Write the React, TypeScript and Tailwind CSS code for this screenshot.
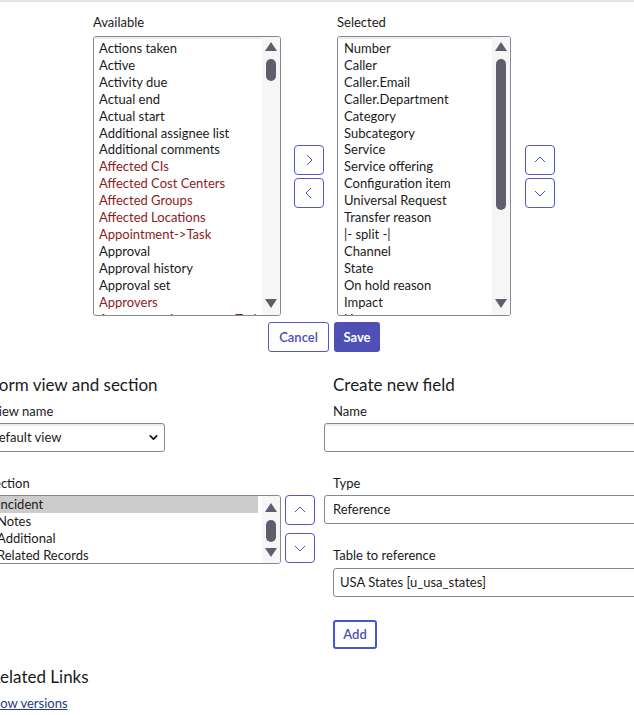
import { ChevronDown } from "lucide-react";

const available: [string, boolean][] = [
  ["Actions taken", false],
  ["Active", false],
  ["Activity due", false],
  ["Actual end", false],
  ["Actual start", false],
  ["Additional assignee list", false],
  ["Additional comments", false],
  ["Affected CIs", true],
  ["Affected Cost Centers", true],
  ["Affected Groups", true],
  ["Affected Locations", true],
  ["Appointment->Task", true],
  ["Approval", false],
  ["Approval history", false],
  ["Approval set", false],
  ["Approvers", true],
  ["Assessment instances->Task", true],
];

const selected = [
  "Number",
  "Caller",
  "Caller.Email",
  "Caller.Department",
  "Category",
  "Subcategory",
  "Service",
  "Service offering",
  "Configuration item",
  "Universal Request",
  "Transfer reason",
  "|- split -|",
  "Channel",
  "State",
  "On hold reason",
  "Impact",
  "Urgency",
];

const sections = ["Incident", "Notes", "Additional", "Related Records"];

function Triangle({ down }: { down?: boolean }) {
  return (
    <svg width="12" height="9" viewBox="0 0 12 9" className="shrink-0">
      <polygon points={down ? "0,0 12,0 6,9" : "6,0 12,9 0,9"} fill="#5f5e6d" />
    </svg>
  );
}

// fake scrollbar, thumb position comes in as a class string
function Scrollbar({ thumb, top }: { thumb: string; top: string }) {
  return (
    <div className={`w-[18px] shrink-0 bg-[#f6f6f6] flex flex-col items-center ${top}`}>
      <Triangle />
      <div className={`w-[10px] rounded-full bg-[#5f5e6d] ${thumb}`} />
      <div className="flex-1" />
      <Triangle down />
    </div>
  );
}

function Chevron({ dir }: { dir: "left" | "right" | "up" | "down" }) {
  const pts = {
    right: "4,1 9,6 4,11",
    left: "8,1 3,6 8,11",
    up: "1,8 6,3 11,8",
    down: "1,4 6,9 11,4",
  }[dir];
  return (
    <svg width="12" height="12" viewBox="0 0 12 12">
      <polyline points={pts} fill="none" stroke="#4f52c4" strokeWidth="1" />
    </svg>
  );
}

function IconButton({ dir }: { dir: "left" | "right" | "up" | "down" }) {
  return (
    <button className="w-[30px] h-[30px] flex items-center justify-center rounded-[4px] border border-[#5557c9] bg-white">
      <Chevron dir={dir} />
    </button>
  );
}

export default function App() {
  return (
    <div className="w-full min-h-screen overflow-hidden bg-white font-['Lato',sans-serif] text-[13px] leading-[17px] text-[#1b1b1b]">
      <div className="h-[2px] bg-[#e4e4e8]" />

      {/* slushbucket */}
      <div className="pl-[93px] pt-[12px] w-[555px]">
        <div className="flex">
          <div className="w-[244px]">Available</div>
          <div>Selected</div>
        </div>
        <div className="flex items-center mt-[5px]">
          <div className="w-[188px] h-[280px] flex rounded-[3px] border border-[#888a93] overflow-hidden">
            <div className="flex-1 min-w-0 pl-[5px] pt-[3px] leading-[16.9px] shadow-[inset_0_2px_0_#ececec]">
              {available.map(([label, ref]) => (
                <div
                  key={label}
                  className={`whitespace-nowrap ${ref ? "text-[#8c1c24]" : ""}`}
                >
                  {label}
                </div>
              ))}
            </div>
            <Scrollbar top="pt-[5px] pb-[7px]" thumb="mt-[8px] h-[22px]" />
          </div>
          <div className="ml-[13px] flex flex-col gap-[3px]">
            <IconButton dir="right" />
            <IconButton dir="left" />
          </div>
          <div className="ml-[13px] w-[174px] h-[280px] flex rounded-[3px] border border-[#888a93] overflow-hidden">
            <div className="flex-1 min-w-0 pl-[6px] pt-[3px] leading-[16.9px] shadow-[inset_0_2px_0_#ececec]">
              {selected.map((label) => (
                <div key={label} className="whitespace-nowrap">
                  {label}
                </div>
              ))}
            </div>
            <Scrollbar top="pt-[5px] pb-[7px]" thumb="mt-[8px] h-[151px]" />
          </div>
          <div className="ml-[14px] flex flex-col gap-[3px]">
            <IconButton dir="up" />
            <IconButton dir="down" />
          </div>
        </div>
        <div className="flex justify-center gap-[5px] mt-[6px]">
          <button className="h-[30px] w-[61px] rounded-[3px] border border-[#5557c9] bg-white text-[#4c4fb3] font-semibold">
            Cancel
          </button>
          <button className="h-[30px] w-[46px] rounded-[3px] bg-[#4f50b6] text-white font-bold">
            Save
          </button>
        </div>
      </div>

      {/* form view + new field */}
      <div className="flex mt-[22px]">
        <div className="w-[334px] shrink-0 -ml-[10px]">
          <h2 className="text-[17px] leading-[22px]">Form view and section</h2>
          <div className="mt-[7px]">View name</div>
          <div className="mt-[3px] -ml-[8px] w-[183px] h-[29px] flex items-center justify-between pl-[6px] pr-[4px] rounded-[3px] border border-[#888a93] shadow-[inset_0_2px_0_#ececec]">
            <span>Default view</span>
            <ChevronDown size={13} strokeWidth={3} color="#111" />
          </div>
          <div className="mt-[23px] -ml-[3px]">Section</div>
          <div className="mt-[3px] flex items-start">
            <div className="w-[291px] h-[69px] flex rounded-[3px] border border-[#888a93] overflow-hidden">
              <div className="flex-1 min-w-0 pt-[0px] pr-[4px]">
                {sections.map((s, i) => (
                  <div
                    key={s}
                    className={`pl-[6px] whitespace-nowrap ${i === 0 ? "bg-[#cccccc]" : ""}`}
                  >
                    {s}
                  </div>
                ))}
              </div>
              <Scrollbar top="pt-[7px] pb-[6px]" thumb="mt-[8px] h-[22px]" />
            </div>
            <div className="ml-[4px] flex flex-col gap-[8px]">
              <IconButton dir="up" />
              <IconButton dir="down" />
            </div>
          </div>
        </div>

        <div className="flex-1 pl-[9px]">
          <h2 className="text-[17px] leading-[22px]">Create new field</h2>
          <div className="mt-[7px]">Name</div>
          <div className="mt-[3px] -ml-[9px] w-[360px] h-[29px] rounded-[3px] border border-[#888a93] shadow-[inset_0_2px_0_#ececec]" />
          <div className="mt-[23px]">Type</div>
          <div className="mt-[3px] -ml-[9px] w-[360px] h-[29px] flex items-center pl-[8px] rounded-[3px] border border-[#888a93]">
            Reference
          </div>
          <div className="mt-[23px]">Table to reference</div>
          <div className="mt-[4px] w-[360px] h-[29px] flex items-center pl-[6px] rounded-[3px] border border-[#888a93]">
            USA States [u_usa_states]
          </div>
          <button className="mt-[23px] w-[44px] h-[29px] rounded-[3px] border-[2.5px] border-[#4256d6] bg-white text-[#4c4fb3] font-semibold">
            Add
          </button>
        </div>
      </div>

      <div className="-ml-[10px] mt-[17px]">
        <h2 className="text-[17px] leading-[22px]">Related Links</h2>
        <a className="block mt-[7px] -ml-[4px] text-[#243a8c] underline">Show versions</a>
      </div>
    </div>
  );
}
